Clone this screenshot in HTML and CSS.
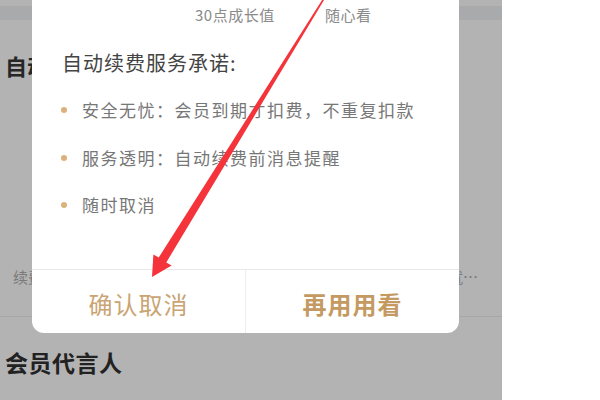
FILE: index.html
```html
<!DOCTYPE html>
<html lang="zh-CN">
<head>
<meta charset="utf-8">
<title>自动续费</title>
<link rel="stylesheet" href="styles.css">
</head>
<body>
<div class="screen">
  <div class="app">
    <div class="topband"></div>
    <div class="sec-title">自动续费</div>
    <div class="renew-row"><span>续费管理</span><span>查看我的成就…</span></div>
    <div class="sep"></div>
    <div class="endorse">会员代言人</div>

    <div class="modal">
      <div class="plans">
        <span class="plan-cut">会员专属特权</span>
        <span class="plan-cut">海量片库</span>
        <span class="plan-sub">30点成长值</span>
        <span class="plan-sub">随心看</span>
      </div>
      <div class="promise-title">自动续费服务承诺:</div>
      <ul class="promise-list">
        <li class="promise-item"><span class="dot"></span><span>安全无忧：会员到期才扣费，不重复扣款</span></li>
        <li class="promise-item"><span class="dot"></span><span>服务透明：自动续费前消息提醒</span></li>
        <li class="promise-item"><span class="dot"></span><span>随时取消</span></li>
      </ul>
      <div class="actions">
        <div class="btn btn-cancel">确认取消</div>
        <div class="btn btn-keep">再用用看</div>
      </div>
    </div>
  </div>
  <div class="blank"></div>

  <svg class="arrow" width="600" height="400" viewBox="0 0 600 400" xmlns="http://www.w3.org/2000/svg">
    <polygon fill="#f4333a" points="323.6,-2.4 158.7,257.6 153.4,254.4 152,277 171.6,265.6 166.3,262.4 325,-1.6"/>
  </svg>
</div>
</body>
</html>
```

FILE: styles.css
```css
* { box-sizing: border-box; }
html, body { margin: 0; padding: 0; }
body {
  width: 600px;
  height: 400px;
  overflow: hidden;
  background: #ffffff;
  font-family: "Noto Sans CJK SC", "Noto Sans", sans-serif;
}
.screen {
  position: relative;
  width: 600px;
  height: 400px;
  display: flex;
}
.app {
  position: relative;
  width: 502px;
  height: 400px;
  background: #b3b3b3;
  display: flex;
  flex-direction: column;
}
.blank { flex: 1; background: #ffffff; }
.topband {
  height: 14px;
  margin-top: 6px;
  background: #a9aaac;
}
.sec-title {
  margin-top: 30px;
  height: 30px;
  line-height: 30px;
  padding-left: 5px;
  font-size: 22px;
  font-weight: bold;
  color: #262626;
}
.renew-row {
  margin-top: 182px;
  height: 30px;
  line-height: 30px;
  padding: 0 24px 0 13px;
  display: flex;
  justify-content: space-between;
  font-size: 15px;
  color: #7a7a7a;
}
.sep {
  margin-top: 24px;
  height: 1px;
  background: #a7a7a7;
}
.endorse {
  margin-top: 20px;
  height: 50px;
  line-height: 50px;
  padding-left: 5px;
  font-size: 23px;
  letter-spacing: 0.5px;
  font-weight: bold;
  color: #222222;
}

/* modal overlay */
.modal {
  position: absolute;
  left: 32px;
  top: -40px;
  width: 427px;
  height: 373px;
  background: #ffffff;
  border-radius: 12px;
  display: flex;
  flex-direction: column;
  padding-top: 24px;
}
.plans {
  display: grid;
  grid-template-columns: 130px auto;
  padding-left: 163px;
  color: #8a8a8a;
  font-size: 15px;
  letter-spacing: 0.5px;
}
.plan-cut { height: 20px; line-height: 13px; color: #999999; overflow: hidden; }
.plan-sub { height: 22px; line-height: 22px; }
.promise-title {
  margin-top: 23px;
  padding-left: 30px;
  height: 28px;
  line-height: 28px;
  font-size: 20px;
  letter-spacing: 1px;
  color: #444444;
}
.promise-list {
  list-style: none;
  margin: 19px 0 0 0;
  padding: 0 0 0 29px;
  display: flex;
  flex-direction: column;
  gap: 19.5px;
}
.promise-item {
  display: flex;
  align-items: center;
  gap: 15px;
  height: 28px;
  line-height: 28px;
  font-size: 17px;
  letter-spacing: 1.5px;
  color: #777777;
}
.dot {
  width: 6px;
  height: 6px;
  border-radius: 50%;
  background: #dcb27c;
  flex: none;
}
.actions {
  margin-top: auto;
  height: 64px;
  border-top: 1px solid #e8e8e8;
  display: grid;
  grid-template-columns: 213px 1fr;
}
.btn {
  display: flex;
  align-items: center;
  justify-content: center;
  font-size: 24px;
  letter-spacing: 1px;
  padding-top: 3px;
}
.btn-cancel { color: #caa473; }
.btn-keep {
  color: #c49a62;
  font-weight: bold;
  border-left: 1px solid #ededed;
}

.arrow {
  position: absolute;
  left: 0;
  top: 0;
  pointer-events: none;
}
```
